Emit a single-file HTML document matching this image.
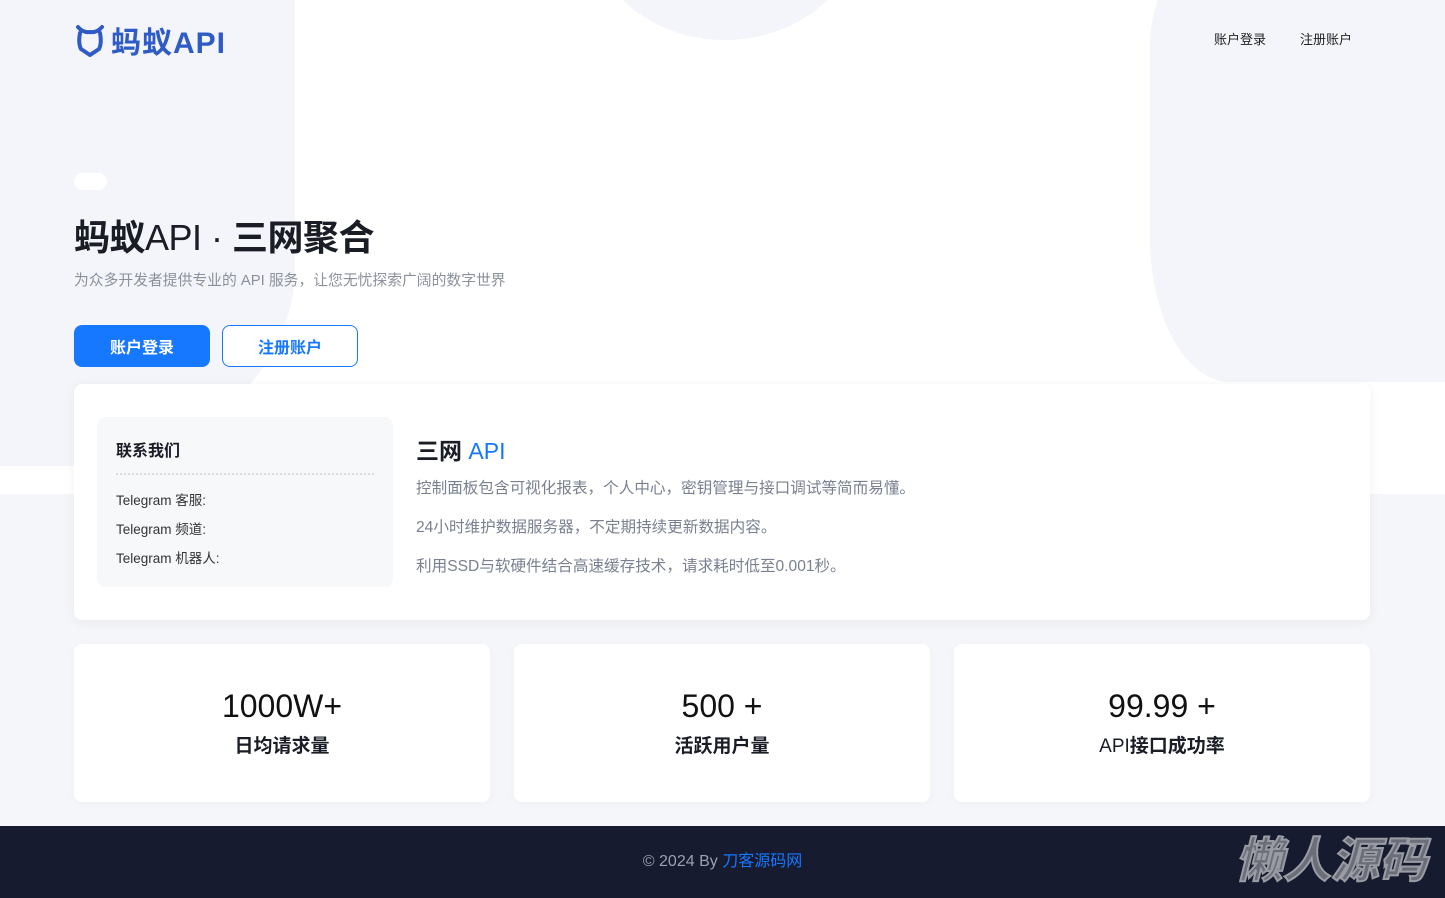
<!DOCTYPE html>
<html><head><meta charset="utf-8"><style>
*{margin:0;padding:0;box-sizing:border-box}
body{width:1445px;height:898px;overflow:hidden;background:#f5f6f9;font-family:"Liberation Sans","Noto Sans CJK SC",sans-serif;position:relative;color:#1a1d26}
.hero{position:absolute;left:0;top:0;width:1445px;height:494px;background:#fff;overflow:hidden}
.blob{position:absolute;background:#f3f5fa}
.logo{position:absolute;left:75px;top:18px;display:flex;align-items:center;color:#2f5bc7;font-size:30px;font-weight:bold;letter-spacing:1px}
.nav{position:absolute;top:29px;font-size:13px;color:#222}
.pill{position:absolute;left:74px;top:173px;width:33px;height:17px;border-radius:9px;background:#fff}
h1{position:absolute;left:74px;top:209px;font-size:36px;font-weight:bold;white-space:nowrap;letter-spacing:-0.5px}
h1 span{font-weight:normal}
.sub{position:absolute;left:74px;top:269px;font-size:14.8px;color:#8b909a}
.btn{position:absolute;top:325px;width:136px;height:42px;border-radius:8px;font-size:16px;font-weight:bold;display:flex;align-items:center;justify-content:center}
.card{position:absolute;left:74px;top:384px;width:1296px;height:236px;background:#fff;border-radius:8px;box-shadow:0 2px 12px rgba(0,0,0,.06)}
.inner{position:absolute;left:23px;top:33px;width:296px;height:170px;background:#f7f8fa;border-radius:8px;padding:20px 19px}
.inner h3{font-size:16px;padding-bottom:12px;border-bottom:2px dotted #d8dbe0;margin-bottom:14px}
.inner p{font-size:13.5px;color:#333;margin-bottom:9px}
.right{position:absolute;left:342px;top:48px}
.right h2{font-size:23px;font-weight:bold;margin-bottom:10px}
.right h2 b{color:#1677ff;font-weight:normal}
.right p{font-size:15.6px;color:#7a8090;margin-bottom:17px}
.stat{position:absolute;top:644px;width:416px;height:158px;background:#fff;border-radius:8px;text-align:center;box-shadow:0 2px 10px rgba(0,0,0,.03)}
.stat .n{font-size:32px;margin-top:44px;color:#111}
.stat .l{font-size:19px;font-weight:bold;margin-top:6px}
.foot{position:absolute;left:0;top:826px;width:1445px;height:72px;background:#161b2f;color:#9aa0ae;font-size:16px;text-align:center;line-height:72px}
.foot a{color:#1677ff;text-decoration:none}
.wm{position:absolute;right:18px;top:832px;font-size:48px;font-weight:bold;font-style:italic;color:#6b6e78;-webkit-text-stroke:2px #9a9ca4;line-height:60px}
</style></head><body>
<div class="hero">
<div class="blob" style="left:-100px;top:-100px;width:395px;height:566px;border-radius:0 0 60% 0/0 0 35% 0"></div>
<div class="blob" style="left:0;top:300px;width:200px;height:166px"></div>
<div class="blob" style="left:590px;top:-190px;width:270px;height:230px;border-radius:50%"></div>
<div class="blob" style="left:1150px;top:-100px;width:400px;height:482px;border-radius:40% 0 0 20%/30% 0 0 30%"></div>
</div>
<div class="logo"><svg width="30" height="34" viewBox="0 0 30 34"><path d="M3 4 Q8 10 15 9 Q22 10 27 4 M5 10 Q3 20 6 26 L15 32 L24 26 Q27 20 25 10" fill="none" stroke="#2f5bc7" stroke-width="4" stroke-linecap="round"/></svg><span style="margin-left:6px">蚂蚁API</span></div>
<div class="nav" style="left:1214px">账户登录</div>
<div class="nav" style="left:1300px">注册账户</div>
<div class="pill"></div>
<h1>蚂蚁<span>API · </span>三网聚合</h1>
<div class="sub">为众多开发者提供专业的 API 服务，让您无忧探索广阔的数字世界</div>
<div class="btn" style="left:74px;background:#1677ff;color:#fff">账户登录</div>
<div class="btn" style="left:222px;border:1px solid #1677ff;color:#1677ff;background:#fff">注册账户</div>
<div class="card">
<div class="inner"><h3>联系我们</h3><p>Telegram 客服:</p><p>Telegram 频道:</p><p>Telegram 机器人:</p></div>
<div class="right"><h2>三网 <b>API</b></h2>
<p>控制面板包含可视化报表，个人中心，密钥管理与接口调试等简而易懂。</p>
<p>24小时维护数据服务器，不定期持续更新数据内容。</p>
<p>利用SSD与软硬件结合高速缓存技术，请求耗时低至0.001秒。</p></div>
</div>
<div class="stat" style="left:74px"><div class="n">1000W+</div><div class="l">日均请求量</div></div>
<div class="stat" style="left:514px"><div class="n">500 +</div><div class="l">活跃用户量</div></div>
<div class="stat" style="left:954px"><div class="n">99.99 +</div><div class="l"><span style="font-weight:normal">API</span>接口成功率</div></div>
<div class="foot">© 2024 By <a>刀客源码网</a></div>
<div class="wm">懒人源码</div>
</body></html>
